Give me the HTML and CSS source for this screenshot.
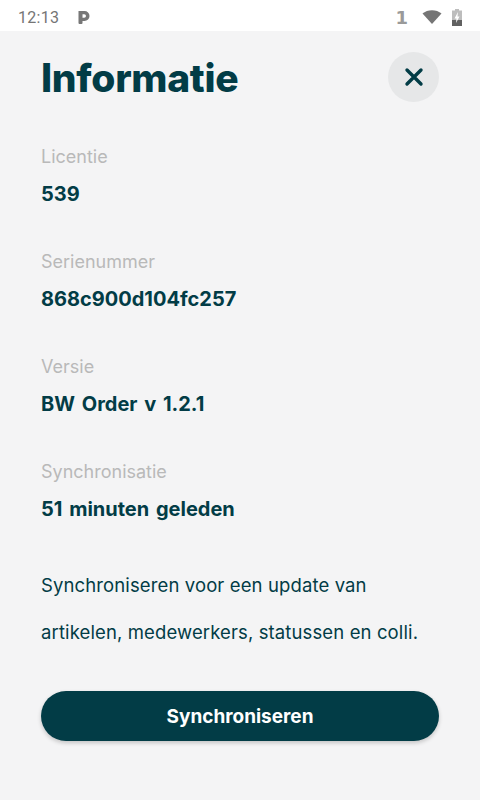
FILE: index.html
```html
<!DOCTYPE html>
<html lang="nl">
<head>
    <meta charset="UTF-8">
    <meta name="viewport" content="width=device-width, initial-scale=1.0">
    <title>Informatie</title>
    <link rel="stylesheet" href="styles.css">
</head>
<body>
    <div class="status-bar">
        <span class="clock">12:13</span>
        <svg class="status-p" width="13" height="14" viewBox="0 0 13 14">
            <path d="M1.500 1h6a5 5 0 0 1 0 10H5.500v2a1 1 0 0 1-1 1h-2a1 1 0 0 1-1-1z M5.500 4.200v3.600h1.700a1.800 1.800 0 0 0 0-3.600z" fill="#777" fill-rule="evenodd"/>
        </svg>
        <span class="status-right">
            <span class="sim">1</span>
            <svg class="wifi" width="20" height="16" viewBox="0 0 20 16">
                <path d="M0.500 4.500C5.500 0 14.500 0 19.500 4.500L10 15z" fill="#757575"/>
            </svg>
            <svg class="battery" width="10" height="17" viewBox="0 0 10 17">
                <path d="M3 0h4v1.500h3V17H0V1.500h3z" fill="#bdbdbd"/>
                <path d="M0 11h10v6H0z" fill="#616161"/>
                <path d="M6 3L2.500 9.500h2L4 14l3.500-6.500h-2z" fill="#fff"/>
            </svg>
        </span>
    </div>
    <div class="container">
        <div class="header">
            <h1>Informatie</h1>
            <button class="close-btn" aria-label="Sluiten">
                <svg width="20" height="20" viewBox="0 0 20 20">
                    <path d="M3 3L17 17M17 3L3 17" stroke="#023c46" stroke-width="3.400" stroke-linecap="round"/>
                </svg>
            </button>
        </div>
        <div class="info-item">
            <div class="info-label">Licentie</div>
            <div class="info-value">539</div>
        </div>
        <div class="info-item">
            <div class="info-label">Serienummer</div>
            <div class="info-value">868c900d104fc257</div>
        </div>
        <div class="info-item">
            <div class="info-label">Versie</div>
            <div class="info-value">BW Order v 1.2.1</div>
        </div>
        <div class="info-item">
            <div class="info-label">Synchronisatie</div>
            <div class="info-value">51 minuten geleden</div>
        </div>
        <p class="sync-text">Synchroniseren voor een update van<br>artikelen, medewerkers, statussen en colli.</p>
        <button class="sync-btn">Synchroniseren</button>
    </div>
</body>
</html>
```

FILE: styles.css
```css
* {
    box-sizing: border-box;
}
html, body {
    height: 100%;
}
body {
    margin: 0;
    background-color: #f4f4f5;
    color: #023c46;
    font-family: Inter, "Open Sans", sans-serif;
    overflow: hidden;
}
.status-bar {
    display: flex;
    align-items: center;
    height: 31px;
    padding: 3px 18px 0 18px;
    background-color: white;
}
.clock {
    font-family: Roboto, sans-serif;
    font-size: 16px;
    color: #757575;
    letter-spacing: 0.3px;
}
.status-p {
    margin-left: 18px;
}
.status-right {
    display: flex;
    align-items: center;
    margin-left: auto;
    gap: 10px;
}
.sim {
    margin-right: 4px;
    font-family: "DejaVu Sans", sans-serif;
    font-size: 18px;
    font-weight: 700;
    color: #9a9a9a;
}
.container {
    padding: 21px 41px 0;
}
.header {
    display: flex;
    justify-content: space-between;
    align-items: center;
    height: 50px;
    margin-bottom: 43px;
}
h1 {
    margin: 2px 0 0;
    font-size: 39px;
    font-weight: 800;
    line-height: 54px;
    letter-spacing: -0.3px;
}
.close-btn {
    display: flex;
    align-items: center;
    justify-content: center;
    width: 51px;
    height: 50px;
    padding: 0;
    border: none;
    border-radius: 50%;
    background-color: #e6e7e8;
}
.info-item {
    height: 105px;
}
.info-label {
    font-size: 18px;
    line-height: 24px;
    color: #b9b9b9;
}
.info-value {
    margin-top: 12px;
    font-size: 20px;
    font-weight: 700;
    line-height: 26px;
    word-spacing: 2px;
}
.sync-text {
    margin: 0;
    margin-top: -3px;
    font-size: 18.500px;
    line-height: 47px;
    letter-spacing: 0.120px;
}
.sync-btn {
    display: block;
    width: 100%;
    height: 50px;
    margin-top: 35px;
    border: none;
    border-radius: 25px;
    background-color: #023c46;
    color: white;
    font-family: Inter, sans-serif;
    font-size: 19px;
    font-weight: 700;
    box-shadow: 0 2px 4px rgba(0,0,0,0.2);
}
```
